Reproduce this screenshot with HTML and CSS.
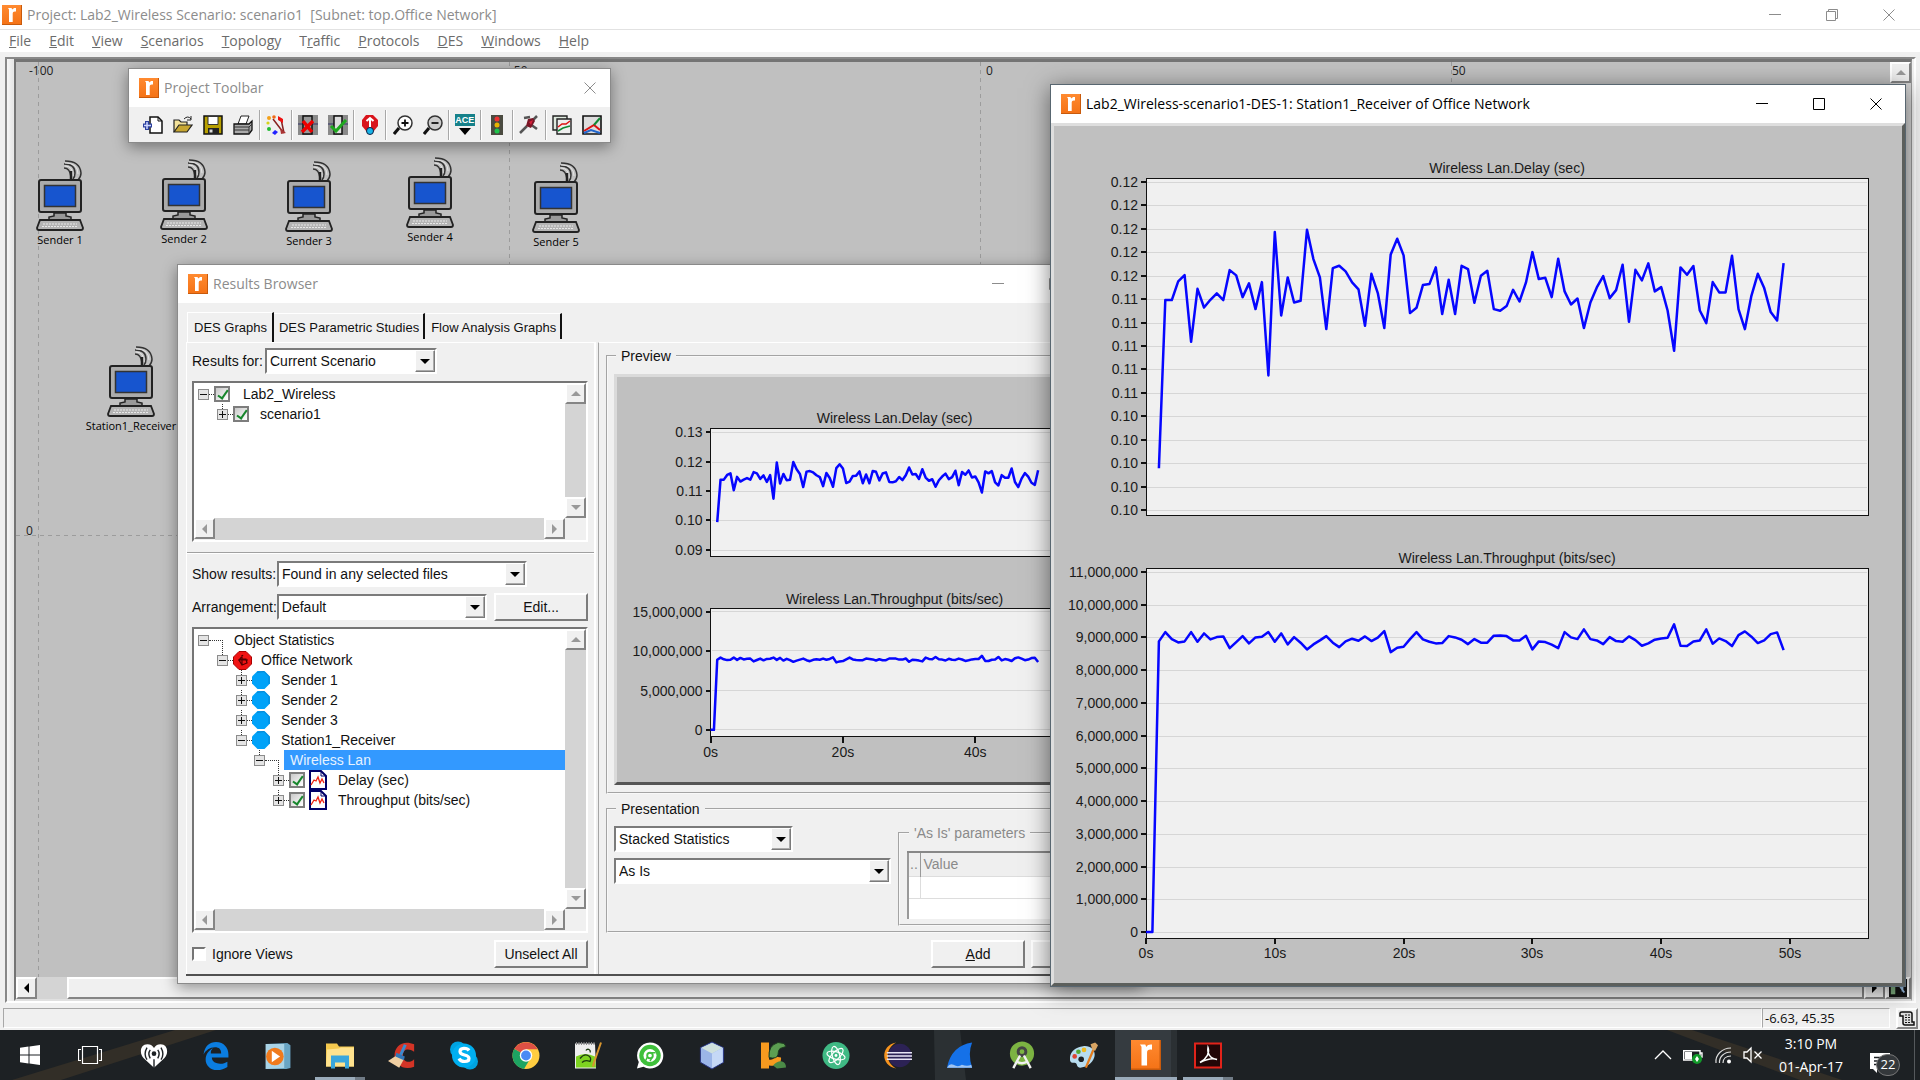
FILE: index.html
```html
<!DOCTYPE html>
<html lang="en">
<head>
<meta charset="utf-8">
<title>Project: Lab2_Wireless Scenario: scenario1</title>
<link rel="stylesheet" href="styles.css">
</head>
<body>
<svg class="defs" aria-hidden="true">
  <linearGradient id="gOrange" x1="0" y1="0" x2="0" y2="1"><stop offset="0" stop-color="#ff8a30"/><stop offset="1" stop-color="#f47216"/></linearGradient>
  <symbol id="logo" viewBox="0 0 20 20"><rect width="20" height="20" fill="url(#gOrange)"/><path d="M0 19.5h20M19.5 0v20" stroke="#c85a0c" fill="none"/><path d="M7 17V4.500L6 3h3.500l.8 1.600C11 3.300 12 2.800 14 3v3.500c-2.200-.4-3.300.3-3.300 2V17z" fill="#fff"/></symbol>
  <symbol id="station" viewBox="0 0 48 72">
    <g fill="none" stroke="#333" stroke-width="1.500"><path d="M28 8q6 0 7 9M28 4q11 0 11 9 0 4-2 6M29 1q15 0 16 12 0 4-3 7"/></g>
    <g fill="none" stroke="#eee" stroke-width=".8"><path d="M29 6q8 0 8 10M29 3q13 0 13 11"/></g>
    <path d="M35 11v9" stroke="#222" stroke-width="2.500"/>
    <rect x="3" y="20" width="42" height="32" rx="2" fill="#ababab" stroke="#222" stroke-width="2"/>
    <rect x="8.500" y="25.500" width="31" height="21" fill="#1755cf" stroke="#333" stroke-width="1.500"/>
    <path d="M18 53h12v3l5 1v3H13v-3l5-1z" fill="#999" stroke="#222" stroke-width="1.500"/>
    <path d="M4 60h40l3 8q0 2-2 2H3q-2 0-2-2z" fill="#b4b4b4" stroke="#222" stroke-width="1.800"/>
    <path d="M7 64h34M6 66.500h36" stroke="#e8e8e8" stroke-dasharray="2 1"/>
  </symbol>
  <symbol id="node" viewBox="0 0 18 18"><path d="M5.500 0h7L18 5.500v7L12.500 18h-7L0 12.500v-7z" fill="#00a2f8"/><path d="M5 1.500l7-1 5 5v7" fill="none" stroke="#0b86d0"/></symbol>
  <symbol id="subnet" viewBox="0 0 19 19"><path d="M6 .5h7L18.500 6v7L13 18.500H6L.5 13V6z" fill="#f01414" stroke="#a00"/><path d="M10 4l-4 5 3 5 5-2-1-4H7M9 4v10M5 9h10" fill="none" stroke="#500" stroke-width="1.200"/></symbol>
  <symbol id="doc" viewBox="0 0 18 20"><path d="M1 1h11l5 5v13H1z" fill="#fff" stroke="#000068" stroke-width="2"/><path d="M12 1v5h5" fill="none" stroke="#000068"/><path d="M2 15l3-5 2 1 2-4 2 6 2-4 2 4" fill="none" stroke="#e21" stroke-width="1.300"/></symbol>
</svg>

<main class="project">
  <header class="titlebar titlebar-main">
    <svg class="app-icon"><use href="#logo"/></svg>
    <h1 class="title-text">Project: Lab2_Wireless Scenario: scenario1&nbsp; [Subnet: top.Office Network]</h1>
    <div class="caption">
      <button class="cap-btn" aria-label="Minimize"><svg viewBox="0 0 12 12"><path d="M0 5.500h12"/></svg></button>
      <button class="cap-btn" aria-label="Restore"><svg viewBox="0 0 12 12"><path d="M.5 2.500h9v9h-9zM2.500 2.500v-2h9v9h-2"/></svg></button>
      <button class="cap-btn" aria-label="Close"><svg viewBox="0 0 12 12"><path d="M.5.5l11 11M11.500.5l-11 11"/></svg></button>
    </div>
  </header>
  <nav class="menubar">
    <button><u>F</u>ile</button><button><u>E</u>dit</button><button><u>V</u>iew</button><button><u>S</u>cenarios</button><button><u>T</u>opology</button><button>T<u>r</u>affic</button><button><u>P</u>rotocols</button><button><u>D</u>ES</button><button><u>W</u>indows</button><button><u>H</u>elp</button>
  </nav>

  <div class="frame"><div class="frame-in">
    <section class="canvas" aria-label="Network canvas">
      <svg class="gridlines" aria-hidden="true"><path d="M22.500 0v920M493.500 0v920M964.500 0v920M1435.500 0v920M0 473.500h1880" stroke="#9c9c9c" stroke-dasharray="4 4" fill="none"/></svg>
      <span class="ruler" style="left:13px;top:0px">-100</span>
      <span class="ruler" style="left:494px;top:0px">-50</span>
      <span class="ruler" style="left:970px;top:0px">0</span>
      <span class="ruler" style="left:1436px;top:0px">50</span>
      <span class="ruler" style="left:10px;top:460px">0</span>
      <figure class="station" style="left:-18px;top:98px"><svg><use href="#station"/></svg><figcaption>Sender 1</figcaption></figure>
      <figure class="station" style="left:106px;top:97px"><svg><use href="#station"/></svg><figcaption>Sender 2</figcaption></figure>
      <figure class="station" style="left:231px;top:99px"><svg><use href="#station"/></svg><figcaption>Sender 3</figcaption></figure>
      <figure class="station" style="left:352px;top:95px"><svg><use href="#station"/></svg><figcaption>Sender 4</figcaption></figure>
      <figure class="station" style="left:478px;top:100px"><svg><use href="#station"/></svg><figcaption>Sender 5</figcaption></figure>
      <figure class="station" style="left:53px;top:284px"><svg><use href="#station"/></svg><figcaption>Station1_Receiver</figcaption></figure>
    </section>
    <div class="vscroll"><button class="sb up" aria-label="Up"></button><span class="trough"></span></div>
    <div class="hscroll main-h"><button class="sb left on" aria-label="Left"></button><span class="trough short"></span><span class="thumb"></span><button class="sb right on" aria-label="Right"></button></div>
    <button class="corner" aria-label="Overview"><svg viewBox="0 0 20 20"><path d="M0 0h20v20H0z" fill="#111"/><path d="M2 3h5v14H2z" fill="#7fae7f"/><path d="M10 5l7 10M15 4v10" stroke="#9bd" stroke-width="2"/></svg></button>
  </div></div>

  <footer class="statusbar">
    <span class="well grow"></span><span class="well coords">-6.63, 45.35</span>
    <button class="log" aria-label="Message log"><svg viewBox="0 0 16 16"><path d="M3 1h8q2 0 2 2v8h2v3H6q-2 0-2-2V5H1V2q0-1 2-1z" fill="#ddd" stroke="#111" stroke-width="1.500"/><path d="M6 4h5M6 6.500h5M6 9h5M6 11.500h5" stroke="#111" stroke-dasharray="2 1"/></svg></button>
  </footer>

  <section class="window toolbar-win">
    <header class="titlebar">
      <svg class="app-icon"><use href="#logo"/></svg><h2 class="title-text">Project Toolbar</h2>
      <div class="caption single"><button class="cap-btn" aria-label="Close"><svg viewBox="0 0 12 12"><path d="M.5.5l11 11M11.500.5l-11 11"/></svg></button></div>
    </header>
    <div class="tools">
      <button aria-label="New"><svg viewBox="0 0 20 20"><path d="M7 2h8l4 4v12H7z" fill="#fff" stroke="#111" stroke-width="1.500"/><path d="M15 2v4h4" fill="none" stroke="#111"/><path d="M4 6v9M0 10.500h9" stroke="#2b3f9e" stroke-width="4"/><path d="M4 7v7M1 10.500h7" stroke="#cfd8ff" stroke-width="1.500"/></svg></button>
      <button aria-label="Open"><svg viewBox="0 0 20 20"><path d="M1 17V5h5l2 2h6v3" fill="#f3e29a" stroke="#222" stroke-width="1.200"/><path d="M1 17l5-7h13l-5 7z" fill="#c7a631" stroke="#222" stroke-width="1.200"/><path d="M11 4q4-4 7 0M18 1v4h-4" fill="none" stroke="#222"/></svg></button>
      <button aria-label="Save"><svg viewBox="0 0 20 20"><path d="M1 1h18v18H1z" fill="#b8a000" stroke="#111" stroke-width="1.500"/><path d="M5 1.500h10v8H5z" fill="#fff" stroke="#333"/><path d="M5 13h11v6H5z" fill="#222"/><path d="M6.500 14.500h3v3h-3z" fill="#ddd"/></svg></button>
      <button aria-label="Print"><svg viewBox="0 0 20 20"><path d="M5 9l3-8h8l-3 8z" fill="#fff" stroke="#222"/><path d="M1 9h15l3-3v9l-3 4H1z" fill="#aaa" stroke="#111" stroke-width="1.300"/><path d="M1 12h15l3-3M16 12v7M1 15h15" fill="none" stroke="#333"/></svg></button>
      <i></i>
      <button aria-label="Topology"><svg viewBox="0 0 20 20"><path d="M7 4l10 13M15 4l3 14" stroke="#822" stroke-width="1.500"/><circle cx="3" cy="3" r="2" fill="#f4a11a"/><circle cx="8" cy="2" r="1.800" fill="#f06a1a"/><path d="M12 1l5 3 0-3v7l-5-3z" fill="#e11"/><circle cx="2" cy="8" r="1.600" fill="#d6d31a"/><circle cx="3" cy="14" r="2" fill="#2b3"/><path d="M9 15l3 2-3 3-3-2z" fill="#22f"/><path d="M14 13l6 5-5 1z" fill="#a33"/></svg></button>
      <i></i>
      <button aria-label="Fail"><svg viewBox="0 0 20 20"><path d="M0 0h20v20H0z" fill="#8a8a8a"/><path d="M0 9h20" stroke="#336" /><path d="M5 1h9v18H5z" fill="#999" stroke="#111" stroke-width="1.500"/><path d="M5 6l9 11M15 6L4 17" stroke="#e00" stroke-width="3.500"/></svg></button>
      <button aria-label="Recover"><svg viewBox="0 0 20 20"><path d="M0 0h20v20H0z" fill="#8a8a8a"/><path d="M0 9h20" stroke="#336"/><path d="M6 1h8v18H6z" fill="#ddd" stroke="#111" stroke-width="1.500"/><path d="M3 11l5 5L18 5" fill="none" stroke="#1ea81e" stroke-width="3"/></svg></button>
      <i></i>
      <button aria-label="Parent subnet"><svg viewBox="0 0 20 20"><path d="M6 0h7l5 5v6l-5 6H7l-5-6V5z" fill="#d9141c"/><path d="M10 3v9M6.500 6L10 3l3.500 3" fill="none" stroke="#fff" stroke-width="2"/><circle cx="10" cy="16" r="3.500" fill="#18b4e8" stroke="#124"/></svg></button>
      <i></i>
      <button aria-label="Zoom in"><svg viewBox="0 0 20 20"><path d="M1 19l5-6" stroke="#111" stroke-width="3"/><circle cx="12" cy="8" r="7" fill="#fff" stroke="#333" stroke-width="1.500"/><path d="M12 4.500v7M8.500 8h7" stroke="#111" stroke-width="1.800"/></svg></button>
      <button aria-label="Zoom out"><svg viewBox="0 0 20 20"><path d="M1 19l5-6" stroke="#111" stroke-width="3"/><circle cx="12" cy="8" r="7" fill="#ccc" stroke="#333" stroke-width="1.500"/><path d="M8.500 8h7" stroke="#111" stroke-width="1.800"/></svg></button>
      <i></i>
      <button aria-label="ACE" class="ace"><b>ACE</b><svg viewBox="0 0 12 7"><path d="M0 0h12L6 7z" fill="#000"/></svg></button>
      <i></i>
      <button aria-label="Run"><svg viewBox="0 0 20 20"><path d="M4 0h12v20H4z" fill="#4a4a40"/><circle cx="10" cy="4" r="2.500" fill="#e33"/><circle cx="10" cy="10" r="2.500" fill="#e8b400"/><circle cx="10" cy="16" r="2.500" fill="#1ec34a"/></svg></button>
      <i></i>
      <button aria-label="Tools"><svg viewBox="0 0 20 20"><path d="M1 18l7-7M5 3l6-1M11 9l7 5M18 1l-4 4" fill="none" stroke="#555" stroke-width="2.500"/><path d="M9 4l5-1 2 3-4 7-5-2z" fill="#7a1626"/><path d="M10 7l4-2-2 5z" fill="#d8203a"/></svg></button>
      <i></i>
      <button aria-label="View results"><svg viewBox="0 0 20 20"><path d="M1 1h14v14H1z" fill="#dfeadf" stroke="#222" stroke-width="1.400"/><path d="M5 4h14v15H5z" fill="#eee" stroke="#222" stroke-width="1.400"/><path d="M6 12l4-3 4 0 4-3" fill="none" stroke="#d11" stroke-width="1.500"/><path d="M6 16l5-3 7-2" fill="none" stroke="#183" stroke-width="1.500"/></svg></button>
      <button aria-label="Graph"><svg viewBox="0 0 20 20"><path d="M1 1h18v18H1z" fill="#ddd" stroke="#111" stroke-width="1.600"/><path d="M2 16l10-6 6 5" fill="none" stroke="#d11" stroke-width="2"/><path d="M12 10l6-7" stroke="#183" stroke-width="2"/><path d="M2 18l7-3 9 3" stroke="#26c" stroke-width="2" fill="none"/></svg></button>
    </div>
  </section>

  <section class="window results-win">
    <header class="titlebar">
      <svg class="app-icon"><use href="#logo"/></svg><h2 class="title-text">Results Browser</h2>
      <div class="caption">
        <button class="cap-btn" aria-label="Minimize"><svg viewBox="0 0 12 12"><path d="M0 5.500h12"/></svg></button>
        <button class="cap-btn" aria-label="Maximize"><svg viewBox="0 0 12 12"><path d="M.5.5h11v11H.5z"/></svg></button>
        <button class="cap-btn" aria-label="Close"><svg viewBox="0 0 12 12"><path d="M.5.5l11 11M11.500.5l-11 11"/></svg></button>
      </div>
    </header>
    <div class="dialog">
      <div class="tabs"><button class="tab active">DES Graphs</button><button class="tab">DES Parametric Studies</button><button class="tab">Flow Analysis Graphs</button></div>
      <div class="panes">
        <div class="pane left-pane">
          <div class="field"><label class="lab-s" for="rf">Results for:</label><span class="combo w172"><select id="rf"><option>Current Scenario</option></select><span class="arrow"></span></span></div>
          <div class="listbox files">
            <ul class="tree">
              <li class="l1"><span class="exp minus"></span><span class="dots"></span><input type="checkbox" checked id="c1"><label for="c1" class="g12">Lab2_Wireless</label></li>
              <li class="l2"><span class="exp vline"></span><span class="dots"></span><input type="checkbox" checked id="c2"><label for="c2" class="g11">scenario1</label></li>
            </ul>
            <div class="vscroll"><button class="sb up" aria-label="Up"></button><span class="trough"></span><button class="sb down" aria-label="Down"></button></div>
            <div class="hscroll"><button class="sb left" aria-label="Left"></button><span class="trough"></span><button class="sb right" aria-label="Right"></button></div>
          </div>
          <hr>
          <div class="field"><label class="lab" for="sr">Show results:</label><span class="combo w250"><select id="sr"><option>Found in any selected files</option></select><span class="arrow"></span></span></div>
          <div class="field"><label class="lab" for="ar">Arrangement:</label><span class="combo w211"><select id="ar"><option>Default</option></select><span class="arrow"></span></span><button class="btn edit">Edit...</button></div>
          <div class="listbox stats">
            <ul class="tree">
              <li class="l1"><span class="exp minus"></span><span class="dots long"></span><span class="g11">Object Statistics</span></li>
              <li class="l2"><span class="exp minus vtall"></span><span class="dots"></span><svg class="ic19"><use href="#subnet"/></svg><span class="g8">Office Network</span></li>
              <li class="l3"><span class="exp vline"></span><span class="dots"></span><svg class="ic18"><use href="#node"/></svg><span class="g11">Sender 1</span></li>
              <li class="l3"><span class="exp vline"></span><span class="dots"></span><svg class="ic18"><use href="#node"/></svg><span class="g11">Sender 2</span></li>
              <li class="l3"><span class="exp vline"></span><span class="dots"></span><svg class="ic18"><use href="#node"/></svg><span class="g11">Sender 3</span></li>
              <li class="l3"><span class="exp minus vline"></span><span class="dots"></span><svg class="ic18"><use href="#node"/></svg><span class="g11">Station1_Receiver</span></li>
              <li class="l4"><span class="exp minus vline"></span><span class="dots long"></span><span class="selected">Wireless Lan</span></li>
              <li class="l5"><span class="exp vtall"></span><span class="dots"></span><input type="checkbox" checked id="c3"><svg class="icdoc"><use href="#doc"/></svg><label for="c3" class="g11">Delay (sec)</label></li>
              <li class="l5"><span class="exp vline"></span><span class="dots"></span><input type="checkbox" checked id="c4"><svg class="icdoc"><use href="#doc"/></svg><label for="c4" class="g11">Throughput (bits/sec)</label></li>
            </ul>
            <div class="vscroll"><button class="sb up" aria-label="Up"></button><span class="trough"></span><button class="sb down" aria-label="Down"></button></div>
            <div class="hscroll"><button class="sb left" aria-label="Left"></button><span class="trough"></span><button class="sb right" aria-label="Right"></button></div>
          </div>
          <div class="field bottom"><input class="plain" type="checkbox" id="iv"><label for="iv">Ignore Views</label><button class="btn push">Unselect All</button></div>
        </div>
        <div class="pane right-pane">
          <fieldset class="preview"><legend>Preview</legend>
            <div class="graph-panel"><svg id="previewChart" viewBox="0 0 500 404"></svg></div>
          </fieldset>
          <fieldset class="presentation"><legend>Presentation</legend>
            <div class="pres-grid">
              <div class="pres-left"><span class="combo w178"><select aria-label="Layout"><option>Stacked Statistics</option></select><span class="arrow"></span></span><span class="combo w277"><select aria-label="Filter"><option>As Is</option></select><span class="arrow"></span></span></div>
              <fieldset class="asis"><legend>'As Is' parameters</legend>
                <table><thead><tr><th>..</th><th>Value</th></tr></thead><tbody><tr><td></td><td></td></tr><tr class="blank"><td colspan="2"></td></tr></tbody></table>
              </fieldset>
            </div>
          </fieldset>
          <div class="actions"><button class="btn"><u>A</u>dd</button><button class="btn">Show</button></div>
        </div>
      </div>
    </div>
  </section>

  <section class="window graph-win">
    <header class="titlebar">
      <svg class="app-icon"><use href="#logo"/></svg><h2 class="title-text">Lab2_Wireless-scenario1-DES-1: Station1_Receiver of Office Network</h2>
      <div class="caption">
        <button class="cap-btn" aria-label="Minimize"><svg viewBox="0 0 12 12"><path d="M0 5.500h12"/></svg></button>
        <button class="cap-btn" aria-label="Maximize"><svg viewBox="0 0 12 12"><path d="M.5.5h11v11H.5z"/></svg></button>
        <button class="cap-btn" aria-label="Close"><svg viewBox="0 0 12 12"><path d="M.5.5l11 11M11.500.5l-11 11"/></svg></button>
      </div>
    </header>
    <div class="graph-body"><svg id="mainChart" viewBox="0 0 848 857"></svg></div>
  </section>
</main>

<nav class="taskbar">
  <svg class="beams" viewBox="0 0 1920 50" preserveAspectRatio="none" aria-hidden="true"><path d="M12 50L175 0h41L61 50z" fill="#322e27"/><path d="M1667 0h25l150 50h-42z" fill="#322e27"/><path d="M934 0h26l6 50h-31z" fill="#2b3033"/></svg>
  <button class="task start" aria-label="Start"><svg viewBox="0 0 20 20"><path d="M0 2.800l8.500-1.200v8H0zM9.500 1.400L20 0v9.600H9.500zM0 10.500h8.500v8L0 17.300zM9.500 10.500H20V20L9.500 18.600z" fill="#fff"/></svg></button>
  <button class="task view" aria-label="Task view"><svg viewBox="0 0 24 20"><path d="M4.500 1.500h15v17h-15zM3 4.500H.5v11H3M21 4.500h2.500v11H21" fill="none" stroke="#fff" stroke-width="1.200"/></svg></button>
  <button class="task" aria-label="Radio"><svg viewBox="0 0 30 28"><path d="M15 27L4 17C-1 12 0 2 8 2c3 0 5 1 7 4 2-3 4-4 7-4 8 0 9 10 4 15z" fill="#fff"/><g fill="none" stroke="#1d2124" stroke-width="1.500"><path d="M11 8q-3 4 0 9M19 8q3 4 0 9M7.500 5.500q-4 7 0 13M22.500 5.500q4 7 0 13M15 18v10"/></g><circle cx="15" cy="12" r="2.500" fill="#1d2124"/></svg></button>
  <button class="task" aria-label="Edge"><svg viewBox="0 0 26 28"><path d="M1 13C2 5 7 1 13 1c8 0 12 6 12 12v3H9c0 4 4 6 8 6 3 0 5-1 7-2v5c-3 2-6 3-10 3C7 28 3 23 3 18c0-5 3-9 7-11-2 2-2 3-2 5h10c0-4-2-6-6-6-5 0-9 3-11 7z" fill="#0b7de0"/></svg></button>
  <button class="task" aria-label="Media Player"><svg viewBox="0 0 26 28"><path d="M2 3l20-1 3 2v22l-4 1H2z" fill="#69a5c4"/><path d="M1 3h18v23l-18 1z" fill="#a9d3e6"/><circle cx="10" cy="15" r="8.500" fill="#f07a1c"/><path d="M7 9.500l8 5.500-8 5.500z" fill="#fff"/></svg></button>
  <button class="task running" aria-label="File Explorer"><svg viewBox="0 0 28 26"><path d="M0 1h11l2 3h15v20H0z" fill="#f5c94e"/><path d="M1 7l12-1 2-1h13v19H0z" fill="#ffe38e"/><path d="M5 26V13h18v13h-4v-6H9v6z" fill="#3aa7dd"/></svg></button>
  <button class="task" aria-label="CCleaner"><svg viewBox="0 0 30 28"><path d="M28 2v8c-6-4-12-3-12 4s7 9 12 4v8C18 30 7 25 7 14S17-3 28 2z" fill="#d33426"/><path d="M17 2l3 1-5 11-3-1z" fill="#3a8bd0"/><path d="M9 14l8 4-5 9-12-7z" fill="#f0cfa2"/><path d="M9 11l9 4-1 4-9-4z" fill="#3277b8"/></svg></button>
  <button class="task" aria-label="Skype"><svg viewBox="0 0 28 28"><circle cx="8" cy="8" r="8" fill="#00a3e0"/><circle cx="20" cy="20" r="8" fill="#00a3e0"/><circle cx="14" cy="14" r="12" fill="#00aff0"/><path d="M19 9c-2-3-9-3-9 1 0 5 9 2 9 7 0 4-8 4-10 0" fill="none" stroke="#fff" stroke-width="3.200"/></svg></button>
  <button class="task" aria-label="Chrome"><svg viewBox="0 0 28 28"><circle cx="14" cy="14" r="13.500" fill="#ffcd40"/><path d="M14 14L2.300 7.200A13.500 13.500 0 0 0 12 27.400l6-10z" fill="#1da462"/><path d="M14 14L2.300 7.200A13.500 13.500 0 0 1 25.700 7.700H14z" fill="#dd5044"/><circle cx="14" cy="14" r="6.200" fill="#fff"/><circle cx="14" cy="14" r="4.900" fill="#4a8af4"/></svg></button>
  <button class="task" aria-label="Notepad++"><svg viewBox="0 0 28 28"><path d="M1 2h20l1 25H1z" fill="#eee"/><path d="M2 15q9-5 19 0l1 11H2z" fill="#7ed321"/><path d="M2 2h19" stroke="#888" stroke-width="3" stroke-dasharray="1 1.500"/><path d="M6 17q4-5 8-3t2 6q-5-2-8 1M12 9a2 2 0 1 1 4 2" fill="none" stroke="#1d3b10" stroke-width="1.300"/><path d="M27 1l-7 20-1 4" stroke="#d9962e" stroke-width="2" fill="none"/></svg></button>
  <button class="task" aria-label="WhatsApp"><svg viewBox="0 0 30 30"><path d="M15 1a14 14 0 1 1-7 26l-7 2 2-7A14 14 0 0 1 15 1z" fill="#fff"/><circle cx="15" cy="15" r="11.500" fill="#3fc03b"/><circle cx="15" cy="15" r="7" fill="#fff"/><circle cx="15" cy="15" r="3" fill="none" stroke="#3fc03b" stroke-width="2"/><path d="M15 12h6M12 17l-2 4M18 16l-3 5" stroke="#3fc03b" stroke-width="1.500"/></svg></button>
  <button class="task" aria-label="VirtualBox"><svg viewBox="0 0 28 30"><path d="M14 1l12 6v15l-12 7-12-7V7z" fill="#9bb5e8" stroke="#26327e"/><path d="M14 2l11 5-11 6L3 7z" fill="#cfe0dd"/><path d="M14 13l11-6v15l-11 6z" fill="#c5d8f6"/></svg></button>
  <button class="task" aria-label="Picture tool"><svg viewBox="0 0 28 28"><path d="M1 27V1h8v17q4 1 6-3l6 1q1 10-12 8v3z" fill="#f79a1f"/><path d="M9 16q-1-12 9-15l6 1 2 3-6 2q-2 2-2 6-1 5-9 3z" fill="#5c9e52" stroke="#1d3b20"/><path d="M13 24q5-5 9-4t4 6l-9 1z" fill="#4b8a47"/></svg></button>
  <button class="task" aria-label="Atom"><svg viewBox="0 0 30 30"><circle cx="15" cy="15" r="14.500" fill="#3fb984"/><g fill="none" stroke="#fff" stroke-width="1.300"><ellipse cx="15" cy="15" rx="10" ry="4" transform="rotate(15 15 15)"/><ellipse cx="15" cy="15" rx="10" ry="4" transform="rotate(75 15 15)"/><ellipse cx="15" cy="15" rx="10" ry="4" transform="rotate(135 15 15)"/></g><circle cx="15" cy="15" r="1.500" fill="#fff"/></svg></button>
  <button class="task" aria-label="Eclipse"><svg viewBox="0 0 30 28"><path d="M13 0C-4 3-4 25 13 28 1 21 1 7 13 0z" fill="#f7941e"/><circle cx="17" cy="14" r="12.500" fill="#2c2255"/><path d="M3 11h27M3 14.500h27M3 18h27" stroke="#e8e4f5" stroke-width="1.700"/></svg></button>
  <button class="task" aria-label="Wireshark"><svg viewBox="0 0 30 28"><path d="M1 27Q6 3 28 0q-5 12 0 27z" fill="#1571e8"/><path d="M1 27q3-5 7-3 5 3 9 0 6 2 10 0l1 3z" fill="#9fc4f2"/></svg></button>
  <button class="task" aria-label="Android Studio"><svg viewBox="0 0 28 30"><circle cx="14" cy="13" r="12.500" fill="#7cb342"/><circle cx="14" cy="11" r="4" fill="none" stroke="#444" stroke-width="3"/><path d="M12 15L5 28M16 15l7 13M8 21q6 4 12 0" fill="none" stroke="#f1f1f1" stroke-width="2.500"/></svg></button>
  <button class="task" aria-label="Paint"><svg viewBox="0 0 30 28"><path d="M14 4c9-1 14 5 12 12s-9 11-15 11c-4 0-3-4-5-5s-5 1-6-3C-1 11 5 5 14 4z" fill="#b7dcf0"/><circle cx="5" cy="15" r="2.500" fill="#d43"/><circle cx="9" cy="10" r="2.500" fill="#5a3"/><circle cx="15" cy="8" r="2.500" fill="#eb2"/><circle cx="12" cy="18" r="3" fill="#1d2124"/><path d="M17 27l8-19" stroke="#e37c1d" stroke-width="2.500"/><path d="M24 8l-2-6 5-2 3 3-3 6z" fill="#d8a463"/></svg></button>
  <button class="task current" aria-label="Riverbed Modeler"><svg class="big"><use href="#logo"/></svg></button>
  <button class="task running" aria-label="Acrobat"><svg viewBox="0 0 28 26"><path d="M1 1h26v24H1z" fill="#220607" stroke="#e2231a" stroke-width="2"/><path d="M6 20c7-4 10-10 8-15-1 6 2 11 9 12-5-2-11 0-17 3z" fill="none" stroke="#fff" stroke-width="1.500"/></svg></button>
  <div class="tray">
    <button class="tr" aria-label="Show hidden icons"><svg viewBox="0 0 18 18"><path d="M1 13l8-8 8 8" fill="none" stroke="#fff" stroke-width="1.300"/></svg></button>
    <button class="tr" aria-label="Battery"><svg viewBox="0 0 20 18"><path d="M.7 4.700H17V14H.7zM17 7h2v4h-2" fill="none" stroke="#fff" stroke-width="1.400"/><path d="M2 6h7v7H2z" fill="#fff"/><circle cx="14" cy="13" r="5" fill="#129a2a"/><path d="M14 10l2 3-2 3-2-3z" fill="#fff"/></svg></button>
    <button class="tr" aria-label="Network"><svg viewBox="0 0 18 18"><g fill="none" stroke="#ddd" stroke-width="1.200"><path d="M2 17C1 9 8 2 17 2M5.500 17C5 11 10 6 17 6M9 17c0-4 3-7 8-7"/></g><circle cx="15" cy="15.500" r="2" fill="#fff"/></svg></button>
    <button class="tr" aria-label="Muted"><svg viewBox="0 0 20 18"><path d="M1 6h3l4-4v14l-4-4H1z" fill="none" stroke="#fff" stroke-width="1.300"/><path d="M11.500 5.500l7 7M18.500 5.500l-7 7" stroke="#fff" stroke-width="1.300"/></svg></button>
    <div class="clock"><time>3:10 PM</time><time>01-Apr-17</time></div>
    <button class="notif" aria-label="Notifications"><svg viewBox="0 0 20 20"><path d="M0 0h20v16H7v4l-4-4H0z" fill="#fff"/><path d="M4 4.500h12M4 8h12M4 11.500h7" stroke="#1d2124" stroke-width="1.300"/></svg><span class="badge">22</span></button>
  </div>
</nav>
<script src="charts.js"></script>
</body>
</html>
```
FILE: styles.css
```css
* { box-sizing: border-box; }
:root {
  --face: #f0f0f0;
  --dark: #7b7b7b;
  --ui: "Open Sans", "Noto Sans", sans-serif;
  --dlg: "Liberation Sans", Arial, sans-serif;
}
body { margin: 0; min-height: 100vh; display: flex; flex-direction: column; background: var(--face); font: 14px/20px var(--dlg); color: #111; overflow: hidden; }
button, select, input { font: inherit; color: inherit; margin: 0; }
button { border: 0; background: none; padding: 0; }
.defs { position: absolute; width: 0; height: 0; }
.project { position: relative; flex: 1; display: flex; flex-direction: column; }

/* title bars */
.titlebar { display: flex; align-items: center; height: 38px; padding: 0 1px 0 10px; background: #fff; color: #8c8c8c; }
.titlebar-main { height: 29px; padding: 0 3px 0 2px; }
.app-icon { width: 20px; height: 20px; flex: none; }
.title-text { margin: 0 0 0 5px; font: 400 14px/20px var(--ui); white-space: nowrap; }
.caption { margin-left: auto; display: flex; }
.cap-btn { width: 57px; height: 28px; display: grid; place-items: center; }
.cap-btn svg { width: 12px; height: 12px; fill: none; stroke: currentColor; }
.caption.single .cap-btn { width: 38px; }

/* menu */
.menubar { display: flex; gap: 18px; height: 23px; padding-left: 9px; background: #fff; border-top: 1px solid #e2e2e2; color: #6b6b6b; font: 14px/20px var(--ui); }
.menubar button { height: 22px; }

/* canvas frame */
.frame { flex: 1; display: flex; margin: 5px 4px 5px 5px; border: 2px solid #888; border-right-color: #fff; border-bottom-color: #fff; padding: 0 2px 0 7px; background: linear-gradient(90deg, #f6f6f6, #e6e6e6 6px, #f0f0f0 8px); }
.frame-in { flex: 1; display: grid; grid-template: minmax(0, 1fr) 22px / minmax(0, 1fr) 5px 21px; border: 2px solid #747474; border-top-width: 3px; border-right: 1px solid #999; border-bottom: 2px solid #e0e0e0; background: #c0c0c0; }
.canvas { position: relative; overflow: hidden; grid-column: 1 / 3; background: #c0c0c0; }
.frame-in > .vscroll { grid-column: 3; }
.gridlines { position: absolute; inset: 0; width: 100%; height: 100%; }
.ruler { position: absolute; font: 12px/18px var(--ui); color: #222; }
.station { position: absolute; width: 124px; margin: 0; display: flex; flex-direction: column; align-items: center; }
.station svg { width: 48px; height: 72px; }
.station figcaption { font: 11px/16px var(--ui); color: #000; }
.corner { grid-column: 2 / 4; display: grid; place-items: center; }
.corner svg { width: 20px; height: 18px; }

/* scroll bars */
.vscroll, .hscroll { display: flex; background: var(--face); }
.vscroll { flex-direction: column; }
.trough { flex: 1; background: #d4d4d4; }
.trough.short { flex: none; width: 30px; }
.thumb { flex: 1; border: 2px solid; border-color: #fff #858585 #858585 #fff; background: var(--face); }
.sb, .corner, .log { background: var(--face); border: 2px solid; border-color: #fff #858585 #858585 #fff; }
.sb { width: 21px; height: 21px; flex: none; display: grid; place-items: center; color: #999; }
.sb.on { color: #000; height: 22px; }
.sb::before { content: ""; border: 5px solid transparent; }
.sb.up::before { border-top: 0; border-bottom-color: currentColor; }
.sb.down::before { border-bottom: 0; border-top-color: currentColor; }
.sb.left::before { border-left: 0; border-right-color: currentColor; }
.sb.right::before { border-right: 0; border-left-color: currentColor; }

/* status bar */
.statusbar { display: flex; height: 22px; padding: 0 2px 2px 3px; }
.well { border: 1px solid; border-color: #a8a8a8 #fff #fff #a8a8a8; font: 13px/18px var(--ui); padding-left: 2px; }
.grow { flex: 1; }
.coords { width: 128px; margin-right: 6px; }
.log { width: 22px; height: 21px; display: grid; place-items: center; }
.log svg { width: 16px; height: 16px; }

/* floating windows */
.window { position: absolute; border: 1px solid #8a8a8a; background: var(--face); box-shadow: 0 4px 14px rgba(0, 0, 0, .4); }
.toolbar-win { left: 128px; top: 68px; width: 483px; }
.results-win { left: 177px; top: 264px; width: 965px; }
.graph-win { left: 1050px; top: 84px; width: 856px; border-color: #586670; box-shadow: 0 4px 22px rgba(0, 0, 0, .5); }
.graph-win .titlebar { color: #000; }
.tools { display: flex; align-items: center; justify-content: space-between; height: 35px; padding: 0 3px 0 9px; }
.tools button { width: 30px; height: 28px; display: grid; place-content: center; justify-items: center; }
.tools button svg { width: 20px; height: 20px; }
.tools i { width: 2px; height: 30px; border-left: 1px solid #a8a8a8; border-right: 1px solid #fff; }
.tools .ace b { width: 20px; background: #16818a; color: #fff; font: 700 9px/12px var(--dlg); text-align: center; }
.tools .ace svg { width: 12px; height: 7px; margin-top: 2px; }

/* dialog */
.dialog { padding: 9px 8px 7px; }
.tabs { display: flex; height: 30px; padding-left: 1px; font-size: 13px; }
.tab { margin-top: 1px; height: 26px; line-height: 22px; padding: 3px 4px 0 5px; border-right: 2px solid #111; border-top: 1px solid #fff; white-space: nowrap; margin-right: 1px; }
.tab.active { margin-top: 0; height: 30px; padding: 1px 5px 0 6px; border-left: 1px solid #fff; margin-right: 0; }
.panes { display: flex; gap: 2px; border-bottom: 2px solid #505050; }
.pane { border: 1px solid #fff; border-bottom: 0; }
.left-pane { width: 410px; flex: none; padding: 5px 6px 6px 5px; border-right-width: 2px; }
.right-pane { flex: 1; min-width: 0; padding: 4px 6px 6px 7px; border-left-color: #a5a5a5; }
.field { display: flex; align-items: center; }
.lab-s { width: 73px; }
.lab { width: 85px; }
.combo { display: grid; height: 26px; background: #fff; border: 2px solid; border-color: #7b7b7b #fff #fff #7b7b7b; }
.combo > * { grid-area: 1 / 1; }
.combo select { appearance: none; width: 100%; height: 22px; border: 0; padding: 0 22px 0 3px; background: none; outline: 0; }
.arrow { justify-self: end; width: 20px; height: 22px; background: var(--face); border: 1px solid; border-color: #fff #7b7b7b #7b7b7b #fff; box-shadow: inset -1px -1px #aaa; display: grid; place-items: center; pointer-events: none; }
.arrow::before { content: ""; border: 5px solid transparent; border-bottom: 0; border-top-color: #000; }
.w172 { width: 172px; } .w178 { width: 179px; } .w211 { width: 211px; } .w250 { width: 250px; } .w277 { width: 277px; }
.listbox { display: grid; grid-template: minmax(0, 1fr) 22px / minmax(0, 1fr) 21px; border: 2px solid; border-color: #757575 #fff #fff #757575; background: var(--face); }
.files { height: 161px; margin-top: 7px; }
.stats { height: 306px; margin-top: 6px; }
.left-pane hr { height: 2px; border: 0; border-top: 1px solid #a0a0a0; border-bottom: 1px solid #fff; margin: 10px -6px 7px -5px; }
.field + .field { margin-top: 6px; }
.btn { width: 94px; height: 28px; border: 2px solid; border-color: #fff #7b7b7b #7b7b7b #fff; background: var(--face); }
.btn.edit { margin-left: 7px; }
.btn.push { margin-left: auto; }
.field.bottom { margin-top: 7px; }

/* trees */
.tree { list-style: none; margin: 0; padding: 1px 0 0; background: #fff; }
.tree li { display: flex; align-items: center; height: 20px; padding-left: 4px; white-space: nowrap; }
.tree .l2 { padding-left: 23px; }
.tree .l3 { padding-left: 42px; }
.tree .l4 { padding-left: 60px; }
.tree .l5 { padding-left: 79px; }
.exp { position: relative; flex: none; width: 11px; height: 11px; border: 1px solid #8c8c8c; background: linear-gradient(#111, #111) center / 7px 1px no-repeat, linear-gradient(#111, #111) center / 1px 7px no-repeat, #e4e4e4; }
.exp.minus { background: linear-gradient(#111, #111) center / 7px 1px no-repeat, #e4e4e4; }
.vline::before, .vtall::before { content: ""; position: absolute; left: 4px; top: -6px; height: 5px; border-left: 1px dotted #333; }
.vtall::before { top: -14px; height: 13px; }
.dots { flex: none; width: 5px; border-top: 1px dotted #333; }
.dots.long { width: 14px; }
.tree input { appearance: none; flex: none; width: 16px; height: 16px; border: 2px solid #7d7d7d; background: linear-gradient(135deg, #c9c9c9, #fff); position: relative; }
.tree input::after { content: ""; position: absolute; left: 4px; top: 0; width: 4px; height: 9px; border: solid #17862c; border-width: 0 2px 2px 0; transform: rotate(35deg); }
.ic18 { width: 18px; height: 18px; flex: none; }
.ic19 { width: 19px; height: 19px; flex: none; }
.icdoc { width: 18px; height: 20px; flex: none; margin-left: 4px; }
.g8 { margin-left: 9px; } .g11 { margin-left: 11px; } .g12 { margin-left: 13px; }
.tree .selected { flex: 1; margin-left: 5px; padding-left: 6px; height: 20px; background: #3399ff; color: #e6f2ff; }
.plain { appearance: none; width: 14px; height: 14px; margin-right: 6px; border: 2px solid; border-color: #757575 #fff #fff #757575; background: #fff; }

/* right pane */
fieldset { margin: 0; border: 2px groove #f8f8f8; min-width: 0; }
legend { padding: 0 5px; height: 18px; line-height: 18px; margin-left: 2px; }
.preview { padding: 9px 0 7px 6px; }
.graph-panel { height: 411px; border: 3px solid; border-color: #dadada #555 #555 #dadada; background: #c0c0c0; }
#previewChart { display: block; width: 100%; height: 100%; }
.presentation { padding: 8px 0 5px 6px; margin-top: 6px; }
.pres-grid { display: grid; grid-template-columns: 277px minmax(0, 1fr); gap: 7px; }
.pres-left { display: flex; flex-direction: column; gap: 6px; }
.asis { margin: -2px 6px 0 0; padding: 9px 0 5px 7px; color: #8a8a8a; }
table { width: 100%; border-collapse: collapse; background: #fff; border-top: 2px solid #888; border-left: 2px solid #999; }
th { height: 24px; padding: 0 3px; background: #efefef; font-weight: 400; text-align: left; line-height: 20px; border-right: 1px solid #999; }
th:first-child, td:first-child { width: 12px; padding: 0 1px; }
td { height: 22px; padding: 0; border: 1px solid #ddd; }
.blank td { border: 0; height: 21px; }
.actions { display: flex; justify-content: flex-end; gap: 6px; margin: 7px 1px 0 0; }

/* graph window */
.graph-body { border: 3px solid; border-color: #dedede #5c5f5c #5c5f5c #dedede; background: #c0c0c0; }
#mainChart { display: block; width: 100%; }
.chart-text { font: 14px "Liberation Sans", Arial, sans-serif; fill: #1a1a1a; }
.plot { fill: #f0f0f0; stroke: #111; }
.gridline { stroke: #d6d6d6; }
.tick { stroke: #111; stroke-width: 2; }
.series { fill: none; stroke: #0606ff; stroke-width: 2.5; stroke-linejoin: round; }
.plot, .gridline, .tick { shape-rendering: crispEdges; }

/* task bar */
.taskbar { position: relative; display: flex; height: 50px; background: #1d2124; color: #fff; }
.beams { position: absolute; inset: 0; width: 100%; height: 100%; }
.task { position: relative; width: 62px; height: 50px; display: grid; place-items: center; }
.task svg { width: 28px; height: 29px; }
.task.start { width: 60px; } .task.start svg { width: 20px; height: 20px; }
.task.view { width: 63px; padding-right: 3px; } .task.view svg { width: 24px; height: 20px; }
.task svg.big { width: 30px; height: 30px; }
.task.current { background: linear-gradient(90deg, #353b40 56px, #2b3033 56px); }
.running::after, .current::after { content: ""; position: absolute; bottom: 0; left: 6px; width: 50px; height: 3px; background: linear-gradient(90deg, #9aabba 40px, #707b86 40px); }
.current::after { left: 0; width: 62px; background: #9aabba; }
.tray { position: relative; margin-left: auto; display: flex; align-items: center; margin-right: 5px; padding-right: 10px; border-right: 1px solid #55595c; font: 14px/23px var(--ui); }
.tr { width: 30px; height: 40px; display: grid; place-items: center; }
.tr svg { width: 20px; height: 18px; }
.clock { width: 86px; display: flex; flex-direction: column; align-items: center; }
.notif { position: relative; width: 50px; height: 50px; padding: 15px 0 0 16px; text-align: left; }
.notif svg { width: 20px; height: 20px; display: block; }
.badge { position: absolute; left: 22px; top: 24px; width: 24px; height: 22px; border-radius: 11px; border: 1px solid #777; background: #34383b; font: 13px/19px var(--ui); text-align: center; }
```
FILE: charts.js
```js
// Samples are taken every 0.5 s. Delay starts at 1 s, throughput at 0 s.
const delayCounts = [1165,661,661,605,586,786,627,683,660,641,661,571,587,652,611,688,607,887,457,707,593,668,663,450,538,593,748,565,558,575,608,629,738,582,640,745,524,477,527,700,684,616,613,563,703,600,703,558,568,669,588,573,688,693,679,630,665,608,517,598,594,652,537,635,674,656,745,668,623,589,655,631,555,726,570,602,551,635,622,692,813,563,585,559,692,730,607,638,638,528,688,748,648,582,625,697,722,550];
const rateCounts = [1177,1177,305,277,298,308,305,277,306,281,299,292,290,325,307,289,311,293,291,277,306,281,314,292,309,329,314,302,289,309,322,305,297,303,290,304,294,274,337,324,321,298,277,299,306,311,310,289,293,300,313,298,309,309,288,287,289,302,302,288,329,305,307,315,325,277,293,298,269,298,302,313,292,304,306,290,301,318,311,300,296,294,254,318,319,305,302,269,312,296,304,319,286,275,291,310,302,283,278,331];
const delay = delayCounts.map((c, i) => [1 + i / 2, 0.096 + (1290 - c) / 35107]);
const rate = rateCounts.map((c, i) => [i / 2, (1177 - c) / 98.2 * 1e6]);

function add(svg, name, attrs, text) {
  const el = document.createElementNS("http://www.w3.org/2000/svg", name);
  for (const k in attrs) el.setAttribute(k, attrs[k]);
  if (text !== undefined) el.textContent = text;
  svg.appendChild(el);
}

function plot(id, o) {
  const svg = document.getElementById(id);
  const X = t => o.left + t * o.perSecond;
  const Y = v => o.yHigh + (o.high - v) / (o.high - o.low) * (o.yLow - o.yHigh);
  add(svg, "rect", { class: "plot", x: o.left, y: o.top, width: o.right - o.left, height: o.bottom - o.top });
  for (let i = 0; i <= o.steps; i++) {
    const v = o.low + (o.high - o.low) * i / o.steps;
    const y = Math.round(Y(v));
    add(svg, "line", { class: "gridline", x1: o.left + 1, x2: o.right - 1, y1: y, y2: y });
    add(svg, "line", { class: "tick", x1: o.left - 5, x2: o.left, y1: y, y2: y });
    add(svg, "text", { class: "chart-text", x: o.left - 8, y: y + 5, "text-anchor": "end" }, o.format(v));
  }
  (o.seconds || []).forEach(s => {
    const x = Math.round(X(s));
    add(svg, "line", { class: "tick", x1: x, x2: x, y1: o.bottom, y2: o.bottom + 6 });
    add(svg, "text", { class: "chart-text", x: x, y: o.bottom + 20, "text-anchor": "middle" }, s + "s");
  });
  add(svg, "text", { class: "chart-text", x: (o.left + o.right) / 2, y: o.top - 5, "text-anchor": "middle" }, o.title);
  add(svg, "polyline", { class: "series", points: o.data.map(p => X(p[0]).toFixed(1) + "," + Y(p[1]).toFixed(1)).join(" ") });
}

const two = v => (v + 1e-9).toFixed(2);
const whole = v => Math.round(v).toLocaleString("en-US");
const dTitle = "Wireless Lan.Delay (sec)", rTitle = "Wireless Lan.Throughput (bits/sec)";

plot("mainChart", { left: 92, right: 814, top: 52, bottom: 389, perSecond: 12.88, high: 0.124, low: 0.096, yHigh: 56, yLow: 384, steps: 14, format: two, title: dTitle, data: delay });
plot("mainChart", { left: 92, right: 814, top: 442, bottom: 812, perSecond: 12.88, high: 11e6, low: 0, yHigh: 446, yLow: 806, steps: 11, format: whole, title: rTitle, data: rate, seconds: [0, 10, 20, 30, 40, 50] });
plot("previewChart", { left: 92, right: 459, top: 51, bottom: 179, perSecond: 6.6, high: 0.13, low: 0.09, yHigh: 55, yLow: 173, steps: 4, format: two, title: dTitle, data: delay });
plot("previewChart", { left: 92, right: 459, top: 231, bottom: 359, perSecond: 6.6, high: 15e6, low: 0, yHigh: 234, yLow: 352, steps: 3, format: whole, title: rTitle, data: rate, seconds: [0, 20, 40] });
```
